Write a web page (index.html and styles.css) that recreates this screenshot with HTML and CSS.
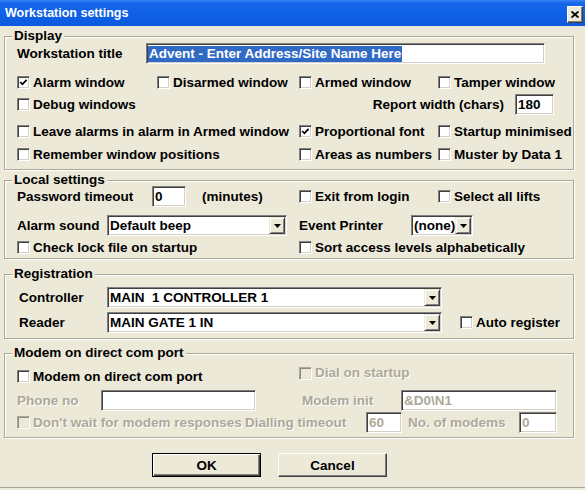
FILE: index.html
```html
<!DOCTYPE html>
<html>
<head>
<meta charset="utf-8">
<title>Workstation settings</title>
<link rel="stylesheet" href="styles.css">
</head>
<body>
<div class="window">
  <div class="titlebar">
    <span class="title">Workstation settings</span>
    <span class="close"><svg width="8" height="7" viewBox="0 0 8 7"><path d="M0.5 0.5 L7.5 6.5 M7.5 0.5 L0.5 6.5" stroke="#000" stroke-width="1.9"/></svg></span>
  </div>
  <div class="body">
    <div class="group g-display">
      <span class="legend">Display</span>
      <div class="line">
        <span class="lbl w129">Workstation title</span>
        <span class="field w399 pl1"><span class="hl">Advent - Enter Address/Site Name Here</span></span>
      </div>
      <div class="row">
        <label class="cb"><span class="box"><svg width="11" height="11" viewBox="0 0 11 11"><path d="M2.2 5 L4.4 7.3 L8.6 2.8" fill="none" stroke="#000" stroke-width="1.8"/></svg></span>Alarm window</label>
        <label class="cb"><span class="box"></span>Disarmed window</label>
        <label class="cb"><span class="box"></span>Armed window</label>
        <label class="cb"><span class="box"></span>Tamper window</label>
      </div>
      <div class="row">
        <label class="cb span2"><span class="box"></span>Debug windows</label>
        <span class="col3 right">
          <span class="lbl">Report width (chars)</span>
          <span class="field w39">180</span>
        </span>
      </div>
      <div class="row">
        <label class="cb span2"><span class="box"></span>Leave alarms in alarm in Armed window</label>
        <label class="cb"><span class="box"><svg width="11" height="11" viewBox="0 0 11 11"><path d="M2.2 5 L4.4 7.3 L8.6 2.8" fill="none" stroke="#000" stroke-width="1.8"/></svg></span>Proportional font</label>
        <label class="cb"><span class="box"></span>Startup minimised</label>
      </div>
      <div class="row">
        <label class="cb span2"><span class="box"></span>Remember window positions</label>
        <label class="cb"><span class="box"></span>Areas as numbers</label>
        <label class="cb"><span class="box"></span>Muster by Data 1</label>
      </div>
    </div>

    <div class="group g-local">
      <span class="legend">Local settings</span>
      <div class="row">
        <span class="line span2">
          <span class="lbl w135">Password timeout</span>
          <span class="field w34">0</span>
          <span class="lbl ml16">(minutes)</span>
        </span>
        <label class="cb"><span class="box"></span>Exit from login</label>
        <label class="cb"><span class="box"></span>Select all lifts</label>
      </div>
      <div class="row">
        <span class="line span2">
          <span class="lbl w90">Alarm sound</span>
          <span class="select w180"><span class="val">Default beep</span><span class="drop"><svg width="7" height="4" viewBox="0 0 7 4"><path d="M0 0 H7 L3.5 4 Z" fill="#000"/></svg></span></span>
        </span>
        <span class="line col3">
          <span class="lbl w112">Event Printer</span>
          <span class="select w62"><span class="val">(none)</span><span class="drop"><svg width="7" height="4" viewBox="0 0 7 4"><path d="M0 0 H7 L3.5 4 Z" fill="#000"/></svg></span></span>
        </span>
      </div>
      <div class="row">
        <label class="cb span2"><span class="box"></span>Check lock file on startup</label>
        <label class="cb col3"><span class="box"></span>Sort access levels alphabetically</label>
      </div>
    </div>

    <div class="group g-reg">
      <span class="legend">Registration</span>
      <div class="line">
        <span class="lbl w90 pl2">Controller</span>
        <span class="select w335"><span class="val">MAIN  1 CONTROLLER 1</span><span class="drop"><svg width="7" height="4" viewBox="0 0 7 4"><path d="M0 0 H7 L3.5 4 Z" fill="#000"/></svg></span></span>
      </div>
      <div class="line">
        <span class="lbl w90 pl2">Reader</span>
        <span class="select w335"><span class="val">MAIN GATE 1 IN</span><span class="drop"><svg width="7" height="4" viewBox="0 0 7 4"><path d="M0 0 H7 L3.5 4 Z" fill="#000"/></svg></span></span>
        <label class="cb ml18"><span class="box"></span>Auto register</label>
      </div>
    </div>

    <div class="group g-modem">
      <span class="legend">Modem on direct com port</span>
      <div class="row">
        <label class="cb span2"><span class="box"></span>Modem on direct com port</label>
        <label class="cb col3 dis up"><span class="box"></span>Dial on startup</label>
      </div>
      <div class="line">
        <span class="lbl w84 dis">Phone no</span>
        <span class="field w155"></span>
        <span class="lbl w99 ml46 dis">Modem init</span>
        <span class="field w156 distext">&amp;D0\N1</span>
      </div>
      <div class="line">
        <label class="cb w228 dis"><span class="box"></span>Don't wait for modem responses</label>
        <span class="lbl w121 dis">Dialling timeout</span>
        <span class="field w36 distext">60</span>
        <span class="lbl w111 ml6 dis">No. of modems</span>
        <span class="field w38 distext">0</span>
      </div>
    </div>

    <div class="buttons">
      <span class="btn default">OK</span>
      <span class="btn">Cancel</span>
    </div>
  </div>
</div>
</body>
</html>
```

FILE: styles.css
```css
* { box-sizing: border-box; }
html, body { margin: 0; padding: 0; }
body {
  width: 585px;
  height: 490px;
  overflow: hidden;
  background: #ece9d8;
  font: bold 13.5px "Liberation Sans", Arial, sans-serif;
  color: #000;
}
.window {
  width: 585px;
  height: 488px;
  background: #ece9d8;
  border-bottom: 1px solid #a9a79c;
}
.titlebar {
  height: 26px;
  background: linear-gradient(to bottom, #3a86f5 0, #1666ea 3px, #0f60e6 55%, #0b5ae0 100%);
  display: flex;
  justify-content: space-between;
  align-items: flex-start;
  padding: 0 2px 0 5px;
}
.title {
  color: #fff;
  font-size: 12.5px;
  line-height: 26px;
}
.close {
  margin-top: 6px;
  width: 16px;
  height: 17px;
  background: #ece9d8;
  border: 1px solid;
  border-color: #fff #404040 #404040 #fff;
  box-shadow: inset -1px -1px 0 #808080;
  display: flex;
  align-items: center;
  justify-content: center;
}
.close svg { display: block; }
.body { padding: 10px 0 0 4px; }

.group {
  position: relative;
  width: 570px;
  border: 1px solid #aca899;
  box-shadow: inset 1px 1px 0 #fff, 1px 1px 0 #fff;
  padding-left: 12px;
  display: grid;
  align-items: start;
}
.legend {
  position: absolute;
  left: 7px;
  top: -8px;
  padding: 0 2px;
  line-height: 14px;
  background: #ece9d8;
  white-space: nowrap;
}
.g-display { padding-top: 6px; padding-bottom: 4px; grid-template-rows: 29px 22px 27px 23px 21px; }
.g-local { margin-top: 10px; padding-top: 5px; padding-bottom: 0; grid-template-rows: 29px 22px 21px; }
.g-reg { margin-top: 15px; padding-top: 12px; padding-bottom: 5px; grid-template-rows: 25px 21px; }
.g-modem { margin-top: 14px; padding-top: 12px; padding-bottom: 4px; grid-template-rows: 24px 22px 21px; }

.row {
  height: 21px;
  display: grid;
  grid-template-columns: 140px 142px 139px 1fr;
  align-items: center;
}
.line {
  height: 21px;
  display: flex;
  align-items: center;
  white-space: nowrap;
}
.span2 { grid-column: 1 / 3; }
.col3 { grid-column: 3 / 5; }
.right {
  width: 255px;
  display: flex;
  justify-content: flex-end;
  align-items: center;
  gap: 11px;
}

.lbl { flex: none; white-space: nowrap; }
.dis { color: #aca899; text-shadow: 1px 1px 0 #fff; }
.up { align-self: start; }

.cb {
  display: flex;
  align-items: center;
  white-space: nowrap;
  line-height: 14px;
}
.box {
  width: 13px;
  height: 13px;
  flex: none;
  margin-right: 3px;
  background: #fff;
  border: 1px solid;
  border-color: #808080 #fff #fff #808080;
  box-shadow: inset 1px 1px 0 #404040, inset -1px -1px 0 #d4d0c8;
}
.box svg { display: block; }
.cb.dis .box {
  background: #ece9d8;
  border-color: #aca899 #fff #fff #aca899;
  box-shadow: inset 1px 1px 0 #8c8a80, inset -1px -1px 0 #e4e1d3;
}

.field, .select {
  flex: none;
  height: 21px;
  background: #fff;
  border: 1px solid;
  border-color: #808080 #fff #fff #808080;
  box-shadow: inset 1px 1px 0 #404040, inset -1px -1px 0 #d4d0c8;
  padding: 0 2px;
  display: flex;
  align-items: center;
  white-space: pre;
  overflow: hidden;
}
.distext { color: #aca899; }
.pl1 { padding-left: 1px; }
.hl {
  background: #316ac5;
  color: #fff;
  padding: 0 1px;
  line-height: 16px;
}
.select { justify-content: space-between; padding-right: 1px; }
.val { white-space: pre; }
.drop {
  flex: none;
  width: 16px;
  height: 17px;
  background: #ece9d8;
  border: 1px solid;
  border-color: #ece9d8 #404040 #404040 #ece9d8;
  box-shadow: inset 1px 1px 0 #fff, inset -1px -1px 0 #808080;
  display: flex;
  align-items: center;
  justify-content: center;
}
.drop svg { display: block; }

.buttons {
  margin-top: 15px;
  padding-left: 148px;
  display: flex;
  gap: 17px;
}
.btn {
  width: 109px;
  height: 24px;
  display: flex;
  align-items: center;
  justify-content: center;
  background: #ece9d8;
  border: 1px solid;
  border-color: #fff #404040 #404040 #fff;
  box-shadow: inset -1px -1px 0 #808080;
}
.btn.default {
  border-color: #000;
  box-shadow: inset 1px 1px 0 #fff, inset -1px -1px 0 #404040, inset -2px -2px 0 #808080;
}

.w34 { width: 34px; }
.w36 { width: 36px; }
.w38 { width: 38px; }
.w39 { width: 39px; }
.w62 { width: 62px; }
.w84 { width: 84px; }
.w90 { width: 90px; }
.w99 { width: 99px; }
.w111 { width: 111px; }
.w112 { width: 112px; }
.w121 { width: 121px; }
.w129 { width: 129px; }
.w135 { width: 135px; }
.w155 { width: 155px; }
.w156 { width: 156px; }
.w180 { width: 180px; }
.w228 { width: 228px; }
.w335 { width: 335px; }
.w399 { width: 399px; }
.pl2 { padding-left: 2px; }
.ml6 { margin-left: 6px; }
.ml16 { margin-left: 16px; }
.ml18 { margin-left: 18px; }
.ml46 { margin-left: 46px; }
```
